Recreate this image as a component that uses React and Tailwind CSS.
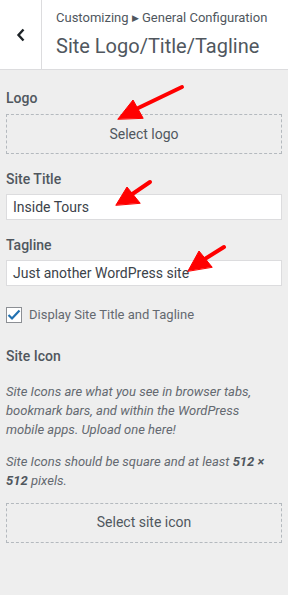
import React from "react";

const font = { fontFamily: "Roboto, 'Liberation Sans', sans-serif" };

const Arrows = () => (
  <svg
    className="absolute left-0 top-0 pointer-events-none"
    width="288"
    height="595"
    viewBox="0 0 288 595"
  >
    <g fill="#ff0000" stroke="#ff0000" strokeLinecap="round">
      <line x1="182" y1="87" x2="132" y2="111" strokeWidth="4" />
      <polygon points="118,119 133,100 143,118" strokeWidth="1" />
      <line x1="150" y1="182" x2="128" y2="197" strokeWidth="4" />
      <polygon points="116,205 127,187 140,203" strokeWidth="1" />
      <line x1="224" y1="247" x2="200" y2="262" strokeWidth="4" />
      <polygon points="188,271 199,251 212,267" strokeWidth="1" />
    </g>
  </svg>
);

const App = () => {
  return (
    <div className="relative w-[288px] h-[595px] bg-[#eeeeee] overflow-hidden" style={font}>
      <div className="flex h-[70px] bg-white border-b border-[#dcdcde]">
        <div className="w-[42px] border-r border-[#dcdcde] flex items-center justify-center">
          <svg width="10" height="14" viewBox="0 0 10 14">
            <path d="M7.5 1.5 L2.5 7 L7.5 12.5" fill="none" stroke="#1d2327" strokeWidth="2.4" />
          </svg>
        </div>
        <div className="pl-[14px] pt-[10px]">
          <div className="text-[13px] leading-[16px] text-[#50575e]">
            Customizing <span className="text-[9px] relative -top-[1px]">▶</span> General Configuration
          </div>
          <div className="text-[20px] leading-[26px] text-[#50575e] mt-[6px]">
            Site Logo/Title/Tagline
          </div>
        </div>
      </div>

      <div className="px-[6px] pt-[18px]">
        <div className="text-[14px] leading-[20px] font-medium text-[#50575e]">Logo</div>
        <button className="mt-[6px] w-full h-[40px] border border-dashed border-[#b4b9be] text-[14px] text-[#50575e] text-center">
          Select logo
        </button>

        <div className="mt-[15px] text-[14px] leading-[20px] font-medium text-[#50575e]">Site Title</div>
        <div className="mt-[5px] h-[26px] bg-white border border-[#dcdcde] px-[6px] flex items-center text-[14px] text-[#3c434a]">
          Inside Tours
        </div>

        <div className="mt-[15px] text-[14px] leading-[20px] font-medium text-[#50575e]">Tagline</div>
        <div className="mt-[5px] h-[26px] bg-white border border-[#dcdcde] px-[6px] flex items-center text-[14px] text-[#3c434a]">
          Just another WordPress site
        </div>

        <div className="mt-[19px] flex items-center">
          <div className="w-[16px] h-[16px] bg-white border border-[#8c8f94] flex items-center justify-center">
            <svg width="14" height="12" viewBox="0 0 14 12">
              <path d="M1.5 6 L5 9.5 L12.5 1.5" fill="none" stroke="#2271b1" strokeWidth="2.2" />
            </svg>
          </div>
          <span className="ml-[7px] text-[13px] text-[#646970]">Display Site Title and Tagline</span>
        </div>

        <div className="mt-[21px] text-[14px] leading-[20px] font-medium text-[#50575e]">Site Icon</div>
        <p className="mt-[16px] w-[266px] text-[13px] leading-[19px] italic text-[#646970]">
          Site Icons are what you see in browser tabs, bookmark bars, and within the WordPress mobile apps. Upload one here!
        </p>
        <p className="mt-[13px] w-[266px] text-[13px] leading-[19px] italic text-[#646970]">
          Site Icons should be square and at least <b className="text-[#50575e]">512 ×</b>{" "}
          <b className="text-[#50575e]">512</b> pixels.
        </p>
        <button className="mt-[13px] w-full h-[40px] border border-dashed border-[#b4b9be] text-[14px] text-[#50575e] text-center">
          Select site icon
        </button>
      </div>
      <Arrows />
    </div>
  );
};

export default App;
